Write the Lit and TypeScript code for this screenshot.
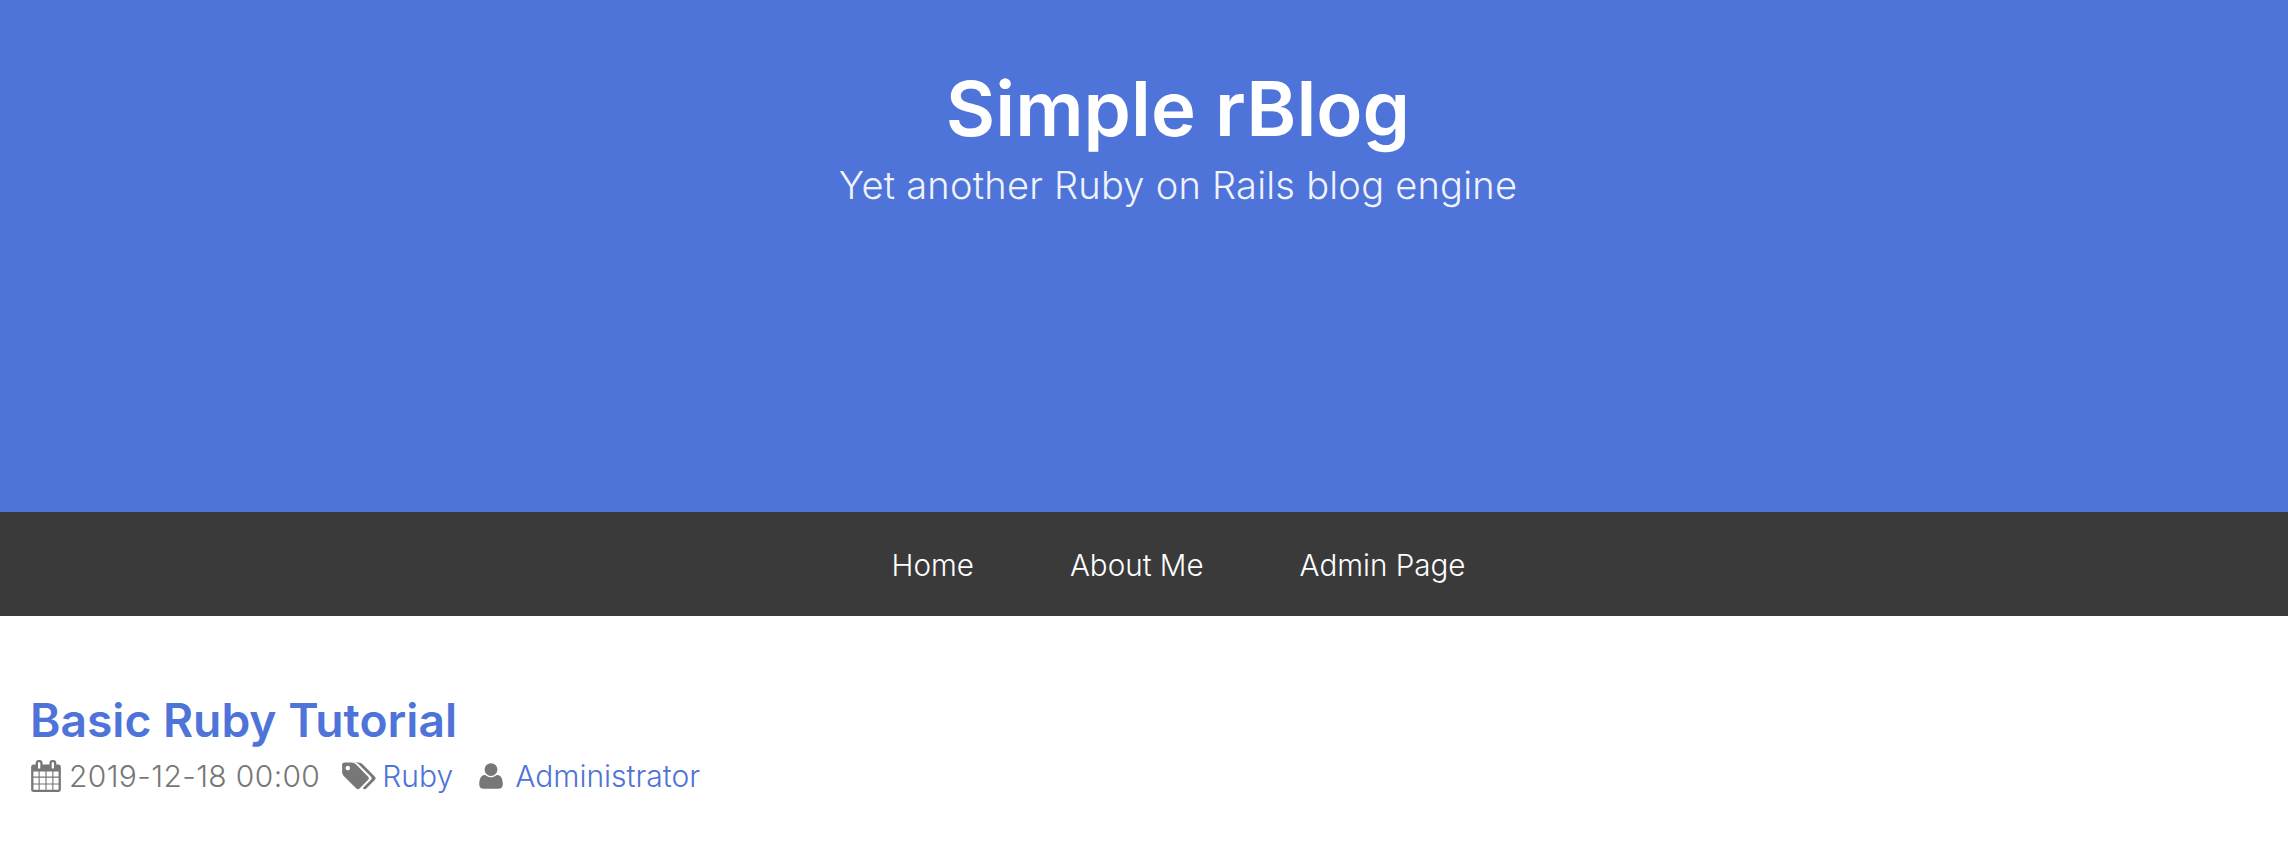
import { LitElement, html, css, svg } from "lit";
import { customElement } from "lit/decorators.js";

const calendar = svg`<path d="M192 1664h288v-288h-288v288zm352 0h320v-288h-320v288zm-352-352h288v-320h-288v320zm352 0h320v-320h-320v320zm-352-384h288v-288h-288v288zm736 736h320v-288h-320v288zm-384-736h320v-288h-320v288zm768 736h288v-288h-288v288zm-384-352h320v-320h-320v320zm-352-864v-288q0-13-9.5-22.5t-22.5-9.5h-64q-13 0-22.5 9.5t-9.5 22.5v288q0 13 9.5 22.5t22.5 9.5h64q13 0 22.5-9.5t9.5-22.5zm736 864h288v-320h-288v320zm-384-384h320v-288h-320v288zm384 0h288v-288h-288v288zm32-480v-288q0-13-9.5-22.5t-22.5-9.5h-64q-13 0-22.5 9.5t-9.5 22.5v288q0 13 9.5 22.5t22.5 9.5h64q13 0 22.5-9.5t9.5-22.5zm384-64v1280q0 52-38 90t-90 38h-1408q-52 0-90-38t-38-90v-1280q0-52 38-90t90-38h128v-96q0-66 47-113t113-47h64q66 0 113 47t47 113v96h384v-96q0-66 47-113t113-47h64q66 0 113 47t47 113v96h128q52 0 90 38t38 90z"/>`;
const tags = svg`<path d="M512 448q0-53-37.5-90.5t-90.5-37.5-90.5 37.5-37.5 90.5 37.5 90.5 90.5 37.5 90.5-37.5 37.5-90.5zm1067 576q0 53-37 90l-491 492q-39 37-91 37-53 0-90-37l-715-716q-38-37-64.5-101t-26.5-117v-416q0-52 38-90t90-38h416q53 0 117 26.5t102 64.5l715 714q37 39 37 91zm384 0q0 53-37 90l-491 492q-39 37-91 37-36 0-59-14t-53-45l470-470q37-37 37-90 0-52-37-91l-715-714q-38-38-102-64.5t-117-26.5h224q53 0 117 26.5t102 64.5l715 714q37 39 37 91z"/>`;
const user = svg`<path d="M1600 1405q0 120-73 189.5t-194 69.5h-874q-121 0-194-69.5t-73-189.5q0-53 3.5-103.5t14-109 26.5-108.5 43-97.5 62-81 85.5-53.5 111.5-20q9 0 42 21.5t74.5 48 108 48 133.5 21.5 133.5-21.5 108-48 74.5-48 42-21.5q61 0 111.5 20t85.5 53.5 62 81 43 97.5 26.5 108.5 14 109 3.5 103.5zm-320-893q0 159-112.5 271.5t-271.5 112.5-271.5-112.5-112.5-271.5 112.5-271.5 271.5-112.5 271.5 112.5 112.5 271.5z"/>`;

@customElement("app-root")
export class AppRoot extends LitElement {
  static styles = css`
    :host {
      display: block;
      font-family: Inter, "Liberation Sans", sans-serif;
      color: #777;
      background: #fff;
      height: 850px;
      overflow: hidden;
    }
    .hero {
      height: 512px;
      box-sizing: border-box;
      padding: 60px 0 0 68px;
      background: #4e73d9;
      text-align: center;
      color: #fff;
    }
    h1 {
      margin: 0;
      font-size: 76px;
      line-height: 96px;
      font-weight: 600;
    }
    .tagline {
      margin-top: 1px;
      font-size: 38px;
      line-height: 56px;
      font-weight: 300;
      letter-spacing: 0.24px;
      color: #f0f3fc;
    }
    nav {
      height: 104px;
      box-sizing: border-box;
      padding: 2px 0 0 69px;
      background: #3a3a3a;
      display: flex;
      justify-content: center;
      align-items: center;
      gap: 96px;
    }
    nav a {
      color: #fff;
      font-size: 29.6px;
      font-weight: 300;
    }
    main {
      padding: 76px 30px 0;
    }
    h2 {
      margin: 0;
      font-size: 46.2px;
      line-height: 56px;
      font-weight: 600;
      color: #4e73d9;
    }
    .meta {
      display: flex;
      align-items: center;
      margin-top: 6px;
      font-size: 30px;
      line-height: 44px;
      font-weight: 300;
    }
    .meta a {
      color: #4e73d9;
    }
    .item {
      display: flex;
      align-items: center;
    }
    .item + .item {
      margin-left: 21px;
    }
    .date {
      letter-spacing: 0.37px;
    }
    svg {
      fill: #777;
      height: 32px;
      display: block;
    }
    .cal {
      width: 32px;
      margin-right: 7px;
    }
    .tag {
      width: 35px;
      margin-right: 6px;
    }
    .item + .item .usr {
      width: 30px;
      height: 30px;
      margin: 0 9px 0 2px;
    }
  `;

  render() {
    return html`
      <header class="hero">
        <h1>Simple rBlog</h1>
        <div class="tagline">Yet another Ruby on Rails blog engine</div>
      </header>
      <nav>
        <a>Home</a>
        <a>About Me</a>
        <a>Admin Page</a>
      </nav>
      <main>
        <h2>Basic Ruby Tutorial</h2>
        <div class="meta">
          <span class="item"><svg class="cal" viewBox="0 0 1792 1792">${calendar}</svg><span class="date">2019-12-18 00:00</span></span>
          <span class="item"><svg class="tag" viewBox="0 0 1984 1792">${tags}</svg><a>Ruby</a></span>
          <span class="item"><svg class="usr" viewBox="0 0 1792 1792">${user}</svg><a>Administrator</a></span>
        </div>
      </main>
    `;
  }
}
